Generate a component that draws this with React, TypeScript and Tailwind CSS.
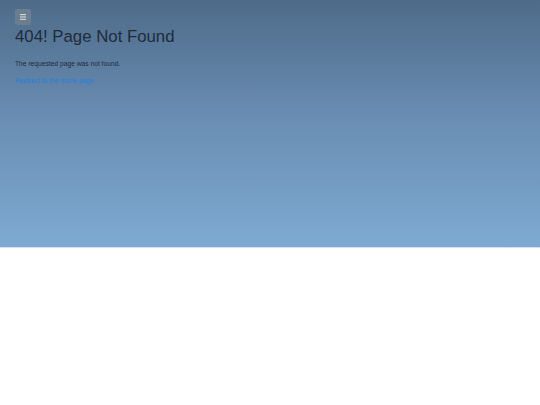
import { Menu } from "lucide-react";

export default function App() {
  return (
    <div className="min-h-[405px] w-full bg-white font-['Liberation_Sans',Arial,sans-serif]">
      <main className="h-[248px] bg-gradient-to-b from-[#4e6b89] via-[#6b8fb5] to-[#7eaad2] px-[15px] pt-[9px] border-b border-[#cfe1f2]">
        <button
          type="button"
          className="flex h-4 w-4 items-center justify-center rounded-[2px] bg-[#6d7d90] text-[#dfe4ea]"
        >
          <Menu size={8} strokeWidth={3} />
        </button>
        <h1 className="mt-[1px] text-[16.8px] leading-[21px] text-[#1e2b3b]">404! Page Not Found</h1>
        <p className="mt-[13px] text-[6.7px] leading-[8px] text-[#1e2b3b]">
          The requested page was not found.
        </p>
        <a href="#" className="mt-[9px] block text-[6.7px] leading-[8px] text-[#1f7ee0]">
          Redirect to the home page
        </a>
      </main>
    </div>
  );
}
